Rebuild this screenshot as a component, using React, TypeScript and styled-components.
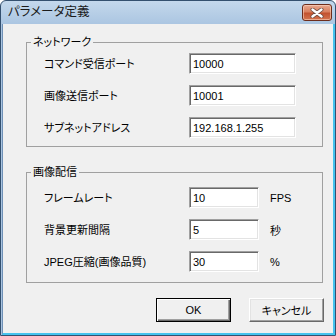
import React from "react";
import styled, { createGlobalStyle } from "styled-components";

const GlobalStyle = createGlobalStyle`
  html, body {
    margin: 0;
    padding: 0;
    background: #ffffff;
  }
  body {
    width: 336px;
    height: 336px;
    overflow: hidden;
    font-family: "Liberation Sans", "Noto Sans CJK JP", sans-serif;
    font-feature-settings: "palt";
    color: #000;
  }
`;

const Window = styled.div`
  box-sizing: border-box;
  width: 336px;
  height: 336px;
  display: flex;
  flex-direction: column;
  border: 1px solid #34506f;
  border-radius: 6px 6px 0 0;
  background: linear-gradient(#c4d8ec, #aac5e1 24px, #a9c3df);
`;

const TitleBar = styled.div`
  height: 23px;
  flex: none;
  display: flex;
  align-items: center;
  justify-content: space-between;
  padding: 0 3px 0 7px;
`;

const Title = styled.span`
  font-size: 12.5px;
  color: #1b1b1b;
  line-height: 1;
`;

const CloseButton = styled.div`
  box-sizing: border-box;
  width: 30px;
  height: 17px;
  display: flex;
  align-items: center;
  justify-content: center;
  border: 1px solid #6d2d1c;
  border-radius: 3px;
  background: linear-gradient(#e8a890, #d9805f 45%, #c2522f 55%, #d4744f);
  box-shadow: inset 0 0 0 1px rgba(255, 220, 200, 0.55);
`;

const Client = styled.div`
  flex: 1;
  margin-left: 1px;
  display: flex;
  flex-direction: column;
  background: #f0f0f0;
  border-left: 1px solid #6f90b6;
  border-right: 2px solid #45c3ee;
  border-bottom: 2px solid #45c3ee;
  padding: 0 10px 0 23px;
`;

const Group = styled.fieldset<{ $mt: number }>`
  margin: ${(p) => p.$mt}px 0 0 0;
  padding: 0;
  border: 1px solid #a0a0a0;
  min-width: 0;
`;

const Legend = styled.legend`
  margin-left: 4px;
  padding: 0 2px;
  font-size: 11px;
  line-height: 14px;
`;

const Rows = styled.div<{ $pt: number; $pb: number }>`
  display: grid;
  grid-template-columns: 145px auto 1fr;
  row-gap: 11px;
  align-items: center;
  padding: ${(p) => p.$pt}px 0 ${(p) => p.$pb}px 17px;
`;

const Label = styled.span`
  font-size: 11px;
  line-height: 14px;
  white-space: nowrap;
`;

const Input = styled.div<{ $w: number }>`
  box-sizing: border-box;
  width: ${(p) => p.$w}px;
  height: 21px;
  display: flex;
  align-items: center;
  padding-left: 3px;
  background: #ffffff;
  border-top: 1px solid #a0a0a0;
  border-left: 1px solid #a0a0a0;
  border-right: 1px solid #ffffff;
  border-bottom: 1px solid #ffffff;
  box-shadow: inset 1px 1px 0 #696969, inset -1px -1px 0 #e3e3e3;
  font-size: 11px;
  color: #000;
`;

const Unit = styled.span`
  margin-left: 11px;
  font-size: 11px;
`;

const ButtonRow = styled.div`
  display: flex;
  justify-content: flex-end;
  gap: 18px;
  margin: 15px -1px 0 0;
`;

const Button = styled.div<{ $default?: boolean }>`
  box-sizing: border-box;
  width: 75px;
  height: 24px;
  display: flex;
  align-items: center;
  justify-content: center;
  background: #f0f0f0;
  font-size: 11px;
  border: 1px solid ${(p) => (p.$default ? "#000000" : "#ffffff")};
  border-right-color: ${(p) => (p.$default ? "#000000" : "#696969")};
  border-bottom-color: ${(p) => (p.$default ? "#000000" : "#696969")};
  box-shadow: ${(p) =>
    p.$default
      ? "inset 1px 1px 0 #ffffff, inset -1px -1px 0 #696969, inset -2px -2px 0 #a0a0a0"
      : "inset -1px -1px 0 #a0a0a0, inset 1px 1px 0 #e3e3e3"};
`;

const CloseIcon = () => (
  <svg width="14" height="10" viewBox="0 0 14 10">
    <path d="M2.5 1.5 L11.5 8.5 M11.5 1.5 L2.5 8.5" stroke="#6a4a40" strokeWidth="4" strokeLinecap="round" />
    <path d="M2.5 1.5 L11.5 8.5 M11.5 1.5 L2.5 8.5" stroke="#ffffff" strokeWidth="2.4" strokeLinecap="round" />
  </svg>
);

export default function App() {
  return (
    <>
      <GlobalStyle />
      <Window>
        <TitleBar>
          <Title>パラメータ定義</Title>
          <CloseButton>
            <CloseIcon />
          </CloseButton>
        </TitleBar>
        <Client>
          <Group $mt={11}>
            <Legend>ネットワーク</Legend>
            <Rows $pt={4} $pb={8}>
              <Label>コマンド受信ポート</Label>
              <Input $w={107}>10000</Input>
              <span />
              <Label>画像送信ポート</Label>
              <Input $w={107}>10001</Input>
              <span />
              <Label>サブネットアドレス</Label>
              <Input $w={107}>192.168.1.255</Input>
              <span />
            </Rows>
          </Group>
          <Group $mt={18}>
            <Legend>画像配信</Legend>
            <Rows $pt={8} $pb={10}>
              <Label>フレームレート</Label>
              <Input $w={70}>10</Input>
              <Unit>FPS</Unit>
              <Label>背景更新間隔</Label>
              <Input $w={70}>5</Input>
              <Unit>秒</Unit>
              <Label>JPEG圧縮(画像品質)</Label>
              <Input $w={70}>30</Input>
              <Unit>%</Unit>
            </Rows>
          </Group>
          <ButtonRow>
            <Button $default>OK</Button>
            <Button>キャンセル</Button>
          </ButtonRow>
        </Client>
      </Window>
    </>
  );
}
